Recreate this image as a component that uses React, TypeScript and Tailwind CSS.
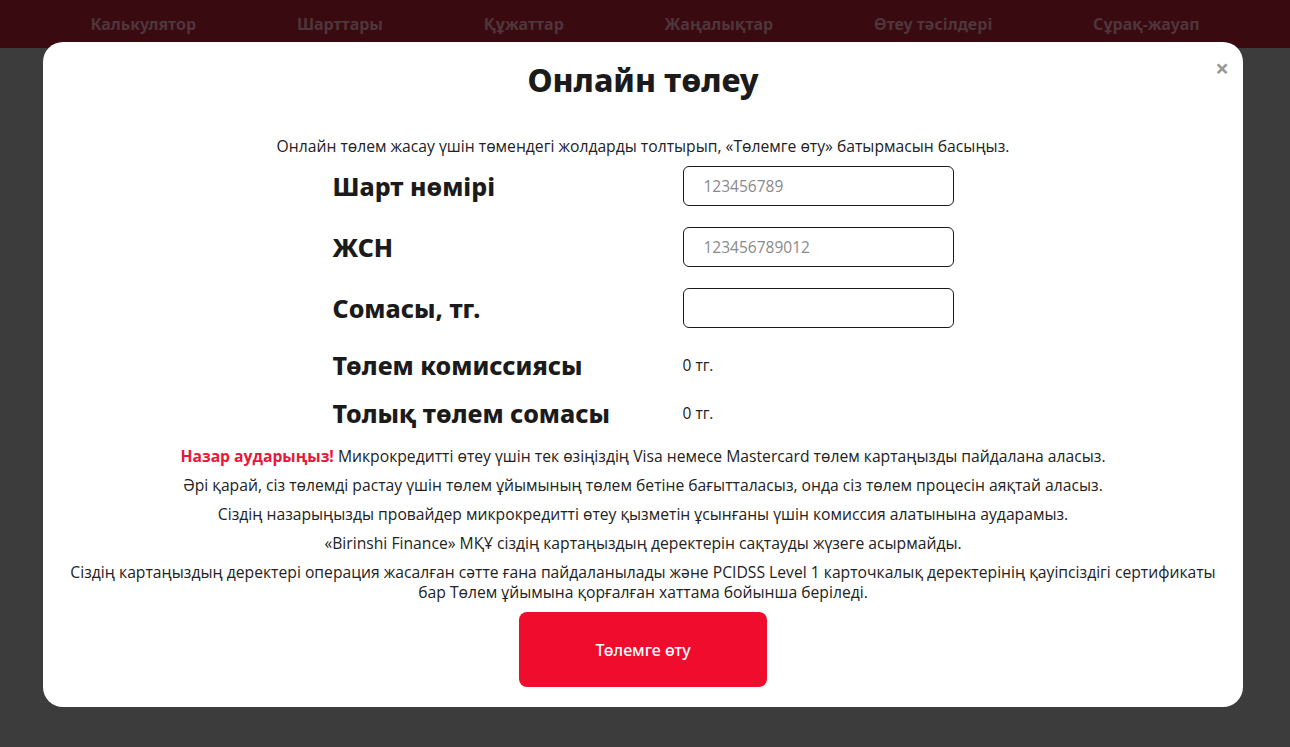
import React from "react";

function Field({ label, placeholder }: { label: string; placeholder?: string }) {
  return (
    <div className="grid grid-cols-[350px_271px] items-center h-[40px]">
      <div className="font-['Noto_Sans',sans-serif] text-[25px] font-extrabold text-[#1b1b1b] leading-none">
        {label}
      </div>
      <input
        className="font-['Open_Sans',sans-serif] h-[40px] w-[271px] rounded-[6px] border border-[#1b1b1b] px-[20px] text-[15.5px] text-[#333] placeholder:text-[#8a8a8a] outline-none"
        placeholder={placeholder}
      />
    </div>
  );
}

function Sum({ label }: { label: string }) {
  return (
    <div className="grid grid-cols-[350px_271px] items-center">
      <div className="font-['Noto_Sans',sans-serif] text-[25px] font-extrabold text-[#1b1b1b] leading-none">
        {label}
      </div>
      <div className="font-['Open_Sans',sans-serif] text-[15.5px] text-[#222]">0 тг.</div>
    </div>
  );
}

export default function App() {
  const nav = ["Калькулятор", "Шарттары", "Құжаттар", "Жаңалықтар", "Өтеу тәсілдері", "Сұрақ-жауап"];
  return (
    <div className="relative h-[747px] w-full overflow-hidden bg-[#3c3c3c]">
      <div className="h-[48px] bg-[#3a0a11] flex items-center justify-around px-[40px]">
        {nav.map((n) => (
          <span key={n} className="font-['Noto_Sans',sans-serif] text-[16px] font-bold text-[#4e363a]">
            {n}
          </span>
        ))}
      </div>
      <div className="absolute inset-0 pt-[42px] px-[43px]">
        <div className="relative h-[665px] w-[1200px] rounded-[20px] bg-white flex flex-col items-center">
          <button className="font-['Noto_Sans',sans-serif] absolute right-[14px] top-[14px] text-[#999] text-[24px] font-bold leading-none">
            ×
          </button>
          <h1 className="font-['Noto_Sans',sans-serif] mt-[18px] text-[32px] font-extrabold text-[#1b1b1b] leading-[40px]">
            Онлайн төлеу
          </h1>
          <p className="font-['Open_Sans',sans-serif] mt-[36px] text-[15.7px] text-[#222] leading-[20px]">
            Онлайн төлем жасау үшін төмендегі жолдарды толтырып, «Төлемге өту» батырмасын басыңыз.
          </p>
          <div className="mt-[10px] flex flex-col gap-[21px]">
            <Field label="Шарт нөмірі" placeholder="123456789" />
            <Field label="ЖСН" placeholder="123456789012" />
            <Field label="Сомасы, тг." />
          </div>
          <div className="mt-[25px] flex flex-col gap-[23px]">
            <Sum label="Төлем комиссиясы" />
            <Sum label="Толық төлем сомасы" />
          </div>
          <div className="font-['Open_Sans',sans-serif] mt-[20px] flex flex-col gap-[9px] px-[25px] text-center text-[15.7px] leading-[20px] text-[#222]">
            <p>
              <span className="font-bold text-[#e8173a]">Назар аударыңыз!</span> Микрокредитті өтеу үшін тек өзіңіздің Visa немесе Mastercard төлем картаңызды пайдалана аласыз.
            </p>
            <p>Әрі қарай, сіз төлемді растау үшін төлем ұйымының төлем бетіне бағытталасыз, онда сіз төлем процесін аяқтай аласыз.</p>
            <p>Сіздің назарыңызды провайдер микрокредитті өтеу қызметін ұсынғаны үшін комиссия алатынына аударамыз.</p>
            <p>«Birinshi Finance» МҚҰ сіздің картаңыздың деректерін сақтауды жүзеге асырмайды.</p>
            <p>
              Сіздің картаңыздың деректері операция жасалған сәтте ғана пайдаланылады және PCIDSS Level 1 карточкалық деректерінің қауіпсіздігі сертификаты бар Төлем ұйымына қорғалған хаттама бойынша беріледі.
            </p>
          </div>
          <button className="font-['Noto_Sans',sans-serif] mt-[10px] h-[75px] w-[248px] rounded-[8px] bg-[#f00c2c] text-white text-[16px] font-medium">
            Төлемге өту
          </button>
        </div>
      </div>
    </div>
  );
}
